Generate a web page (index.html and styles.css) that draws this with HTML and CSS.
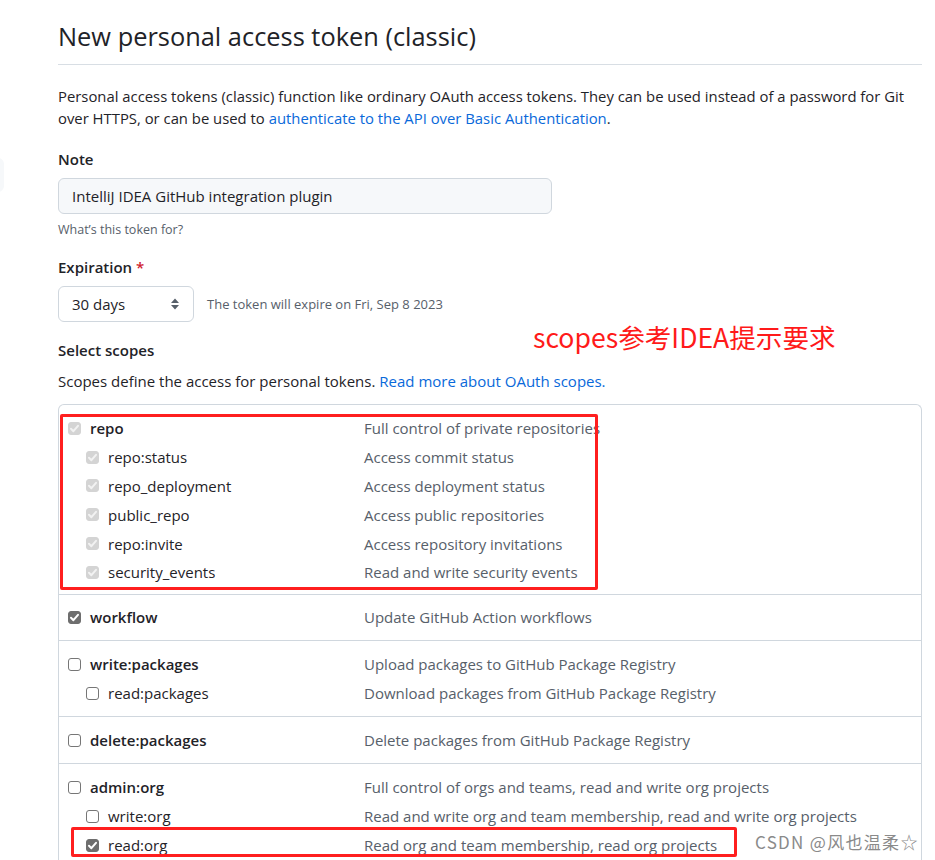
FILE: index.html
```html
<!DOCTYPE html>
<html>
<head>
<meta charset="utf-8">
<link rel="stylesheet" href="styles.css">
</head>
<body>
<div class="page">
  <aside class="sidebar"><div class="side-tab"></div></aside>
  <main class="main">
    <h2 class="title">New personal access token (classic)</h2>
    <p class="intro">Personal access tokens (classic) function like ordinary OAuth access tokens. They can be used instead of a password for Git over HTTPS, or can be used to <a class="link" href="#">authenticate to the API over Basic Authentication</a>.</p>

    <div class="label">Note</div>
    <div class="input">IntelliJ IDEA GitHub integration plugin</div>
    <div class="hint">What’s this token for?</div>

    <div class="label label-exp">Expiration <span class="req">*</span></div>
    <div class="exp-row">
      <div class="select">30 days
        <svg class="sel-icon" width="10" height="14" viewBox="0 0 10 14"><path d="M5 1.5 L9 6 H1 Z M1 8 H9 L5 12.5 Z" fill="#57606a"/></svg>
      </div>
      <span class="exp-note">The token will expire on Fri, Sep 8 2023</span>
    </div>

    <div class="scopes-head">
      <div class="label-scopes">Select scopes</div>
      <div class="annot">scopes参考IDEA提示要求</div>
    </div>
    <p class="scopes-desc">Scopes define the access for personal tokens. <a class="link" href="#">Read more about OAuth scopes.</a></p>

    <div class="scopes">
      <div class="group first">
        <div class="row"><span class="cell"><span class="cb cb-dis"><svg viewBox="0 0 13 13"><path d="M3 6.8 L5.4 9.2 L10 3.8" /></svg></span><span class="name bold">repo</span></span><span class="desc">Full control of private repositories</span></div>
        <div class="row child"><span class="cell"><span class="cb cb-dis"><svg viewBox="0 0 13 13"><path d="M3 6.8 L5.4 9.2 L10 3.8" /></svg></span><span class="name">repo:status</span></span><span class="desc">Access commit status</span></div>
        <div class="row child"><span class="cell"><span class="cb cb-dis"><svg viewBox="0 0 13 13"><path d="M3 6.8 L5.4 9.2 L10 3.8" /></svg></span><span class="name">repo_deployment</span></span><span class="desc">Access deployment status</span></div>
        <div class="row child"><span class="cell"><span class="cb cb-dis"><svg viewBox="0 0 13 13"><path d="M3 6.8 L5.4 9.2 L10 3.8" /></svg></span><span class="name">public_repo</span></span><span class="desc">Access public repositories</span></div>
        <div class="row child"><span class="cell"><span class="cb cb-dis"><svg viewBox="0 0 13 13"><path d="M3 6.8 L5.4 9.2 L10 3.8" /></svg></span><span class="name">repo:invite</span></span><span class="desc">Access repository invitations</span></div>
        <div class="row child"><span class="cell"><span class="cb cb-dis"><svg viewBox="0 0 13 13"><path d="M3 6.8 L5.4 9.2 L10 3.8" /></svg></span><span class="name">security_events</span></span><span class="desc">Read and write security events</span></div>
        <div class="mark mark-repo"></div>
      </div>
      <div class="group">
        <div class="row"><span class="cell"><span class="cb cb-on"><svg viewBox="0 0 13 13"><path d="M3 6.8 L5.4 9.2 L10 3.8" /></svg></span><span class="name bold">workflow</span></span><span class="desc">Update GitHub Action workflows</span></div>
      </div>
      <div class="group loose">
        <div class="row"><span class="cell"><span class="cb"></span><span class="name bold">write:packages</span></span><span class="desc">Upload packages to GitHub Package Registry</span></div>
        <div class="row child"><span class="cell"><span class="cb"></span><span class="name">read:packages</span></span><span class="desc">Download packages from GitHub Package Registry</span></div>
      </div>
      <div class="group loose">
        <div class="row"><span class="cell"><span class="cb"></span><span class="name bold">delete:packages</span></span><span class="desc">Delete packages from GitHub Package Registry</span></div>
      </div>
      <div class="group loose">
        <div class="row"><span class="cell"><span class="cb"></span><span class="name bold">admin:org</span></span><span class="desc">Full control of orgs and teams, read and write org projects</span></div>
        <div class="row child"><span class="cell"><span class="cb"></span><span class="name">write:org</span></span><span class="desc">Read and write org and team membership, read and write org projects</span></div>
        <div class="row child"><span class="cell"><span class="cb cb-on"><svg viewBox="0 0 13 13"><path d="M3 6.8 L5.4 9.2 L10 3.8" /></svg></span><span class="name">read:org</span></span><span class="desc">Read org and team membership, read org projects</span></div>
        <div class="mark mark-org"></div>
      </div>
    </div>
  </main>
</div>
<div class="watermark">CSDN @风也温柔☆</div>
</body>
</html>
```
FILE: styles.css
```css
html, body {
  margin: 0;
  padding: 0;
  background: #ffffff;
  overflow: hidden;
}
body {
  font-family: "Open Sans", "Noto Sans", "Noto Sans CJK SC", sans-serif;
  color: #1f2328;
  font-size: 15px;
  line-height: 22px;
  width: 935px;
  height: 860px;
  position: relative;
}
.page {
  display: flex;
}
.sidebar {
  width: 58px;
  flex: none;
}
.side-tab {
  margin-top: 158px;
  margin-left: -12px;
  width: 16px;
  height: 34px;
  border-radius: 6px;
  background: #f6f8fa;
}
.main {
  width: 864px;
  flex: none;
}
.title {
  margin: 20px 0 0;
  padding-bottom: 12px;
  font-size: 25.4px;
  line-height: 32px;
  font-weight: 400;
  border-bottom: 1px solid #d8dee4;
}
.intro {
  margin: 20px 0 0;
  font-size: 14.85px;
  line-height: 22px;
}
.link {
  color: #0969da;
  text-decoration: none;
}
.label {
  margin-top: 19px;
  font-weight: 600;
  font-size: 15px;
  line-height: 22px;
}
.label-exp {
  margin-top: 17px;
}
.req {
  color: #cf222e;
}
.input {
  margin-top: 8px;
  width: 466px;
  height: 34px;
  box-sizing: content-box;
  padding: 0 13px;
  background: #f6f8fa;
  border: 1px solid #d0d7de;
  border-radius: 6px;
  line-height: 34px;
  font-size: 15px;
}
.hint {
  margin-top: 7px;
  font-size: 12.5px;
  line-height: 18px;
  color: #57606a;
}
.exp-row {
  margin-top: 8px;
  display: flex;
  align-items: center;
  gap: 13px;
}
.select {
  width: 108px;
  height: 34px;
  padding: 0 13px;
  border: 1px solid #d0d7de;
  border-radius: 6px;
  line-height: 34px;
  display: flex;
  justify-content: space-between;
  align-items: center;
  font-size: 15px;
}
.sel-icon {
  display: block;
}
.exp-note {
  font-size: 13px;
  color: #57606a;
}
.scopes-head {
  position: relative;
  margin-top: 17px;
}
.label-scopes {
  font-weight: 600;
  font-size: 15px;
  line-height: 22px;
}
.annot {
  position: absolute;
  left: 475px;
  top: -19px;
  font-family: "Noto Sans CJK SC", sans-serif;
  font-size: 26.6px;
  line-height: 34px;
  color: #ff1a1a;
  white-space: nowrap;
}
.scopes-desc {
  margin: 9px 0 0;
  font-size: 15px;
  line-height: 22px;
}
.scopes {
  margin-top: 12px;
  border: 1px solid #d0d7de;
  border-bottom: none;
  border-radius: 6px 6px 0 0;
}
.group {
  position: relative;
  padding: 8px 0;
  border-bottom: 1px solid #d0d7de;
}
.group.first {
  padding: 9px 0 7px;
}
.row {
  display: grid;
  grid-template-columns: 296px 1fr;
  padding-left: 9px;
  height: 28.8px;
  align-items: center;
  white-space: nowrap;
}
.group.loose {
  padding: 9px 0 8px;
}
.group.loose .row {
  height: 29px;
}
.cell {
  display: flex;
  align-items: center;
  gap: 9px;
}
.row.child .cell {
  margin-left: 18px;
}
.name {
  font-size: 15px;
}
.bold {
  font-weight: 600;
}
.desc {
  color: #57606a;
  font-size: 15px;
}
.cb {
  width: 13px;
  height: 13px;
  box-sizing: border-box;
  border: 1px solid #767676;
  border-radius: 3px;
  background: #fff;
  flex: none;
  display: flex;
}
.cb svg {
  width: 13px;
  height: 13px;
  margin: -1px;
}
.cb svg path {
  fill: none;
  stroke: #fff;
  stroke-width: 2;
  stroke-linecap: round;
  stroke-linejoin: round;
}
.cb-dis {
  border-color: #d4d4d4;
  background: #d4d4d4;
}
.cb-dis svg path {
  stroke: #f2f2f2;
}
.cb-on {
  border-color: #6e6e6e;
  background: #6e6e6e;
}
.mark {
  position: absolute;
  border: 3px solid #ff1f1f;
  border-radius: 2px;
  pointer-events: none;
}
.mark-repo {
  left: 1px;
  top: 9px;
  width: 532px;
  height: 170px;
}
.mark-org {
  left: 12px;
  top: 63px;
  width: 660px;
  height: 24px;
}
.watermark {
  position: absolute;
  left: 755px;
  top: 830px;
  font-family: "Noto Sans CJK SC", "Noto Sans", sans-serif;
  font-size: 17px;
  line-height: 24px;
  letter-spacing: 1.3px;
  color: #8a8a8a;
  white-space: nowrap;
}
```
